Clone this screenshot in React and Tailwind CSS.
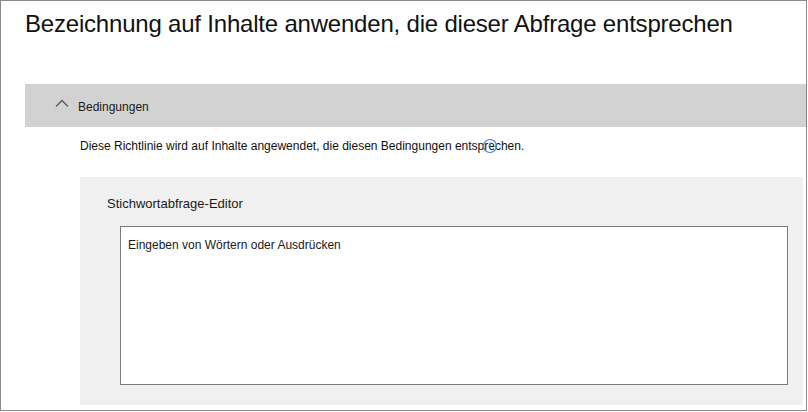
const ChevronUp = () => (
  <svg width="14" height="8" viewBox="0 0 14 8" fill="none" className="mb-[6px] block">
    <path d="M1 7.5 L7 1.5 L13 7.5" stroke="#5a5a5a" strokeWidth="1.3" />
  </svg>
)

const App = () => {
  return (
    <div className="h-[412px] w-[808px] bg-white font-['Liberation_Sans',Arial,sans-serif] text-black">
      <div className="flex h-[411px] w-[807px] flex-col border border-[#8a8a8a]">
        <div className="h-[83px] pl-6 pt-[7px]">
          <h1 className="text-[24px] leading-[32px] tracking-[-0.2px] text-[#111]">
            Bezeichnung auf Inhalte anwenden, die dieser Abfrage entsprechen
          </h1>
        </div>

        <div className="ml-6 flex h-[43px] items-center gap-[9px] bg-[#d2d2d2] pl-[30px]">
          <ChevronUp />
          <span className="pt-[3px] text-[12px] text-[#1a1a1a]">Bedingungen</span>
        </div>

        <div className="relative h-[50px] pl-[79px] pt-[12px]">
          <p className="text-[12px] leading-[14px] text-[#111]">
            Diese Richtlinie wird auf Inhalte angewendet, die diesen Bedingungen entsprechen.
          </p>
          <svg
            className="absolute left-[481px] top-[11px]"
            width="16"
            height="16"
            viewBox="0 0 16 16"
            fill="none"
          >
            <circle cx="8" cy="8" r="6.5" stroke="#4a7fd4" strokeWidth="1.2" />
            <circle cx="8" cy="5" r="0.8" fill="#4a7fd4" />
            <path d="M8 7 V11" stroke="#4a7fd4" strokeWidth="1.1" />
          </svg>
        </div>

        <div className="mb-[5px] ml-[79px] mr-[3px] flex flex-1 flex-col bg-[#f0f0f0] pb-[20px] pl-[27px] pr-[15px]">
          <div className="flex h-[49px] items-center pt-[4px]">
            <span className="text-[13px] text-[#1a1a1a]">Stichwortabfrage-Editor</span>
          </div>
          <div className="ml-[13px] flex-1 border border-[#7a7a7a] bg-white px-[7px] pt-[5px]">
            <span className="text-[12px] text-[#1a1a1a]">
              Eingeben von Wörtern oder Ausdrücken
            </span>
          </div>
        </div>
      </div>
    </div>
  )
}

export default App
